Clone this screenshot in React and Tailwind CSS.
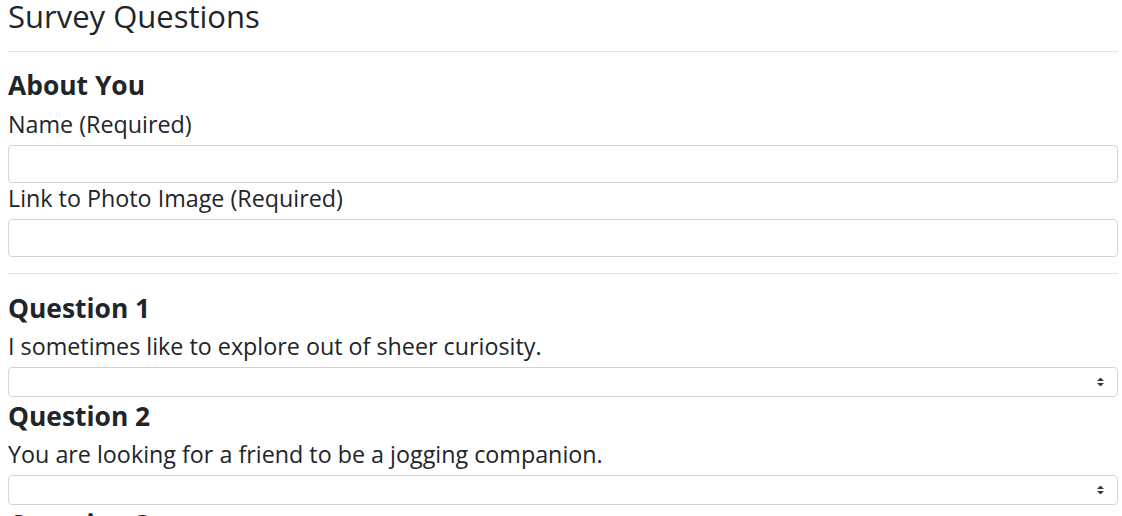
import React from 'react'

const Caret = () => (
  <svg width="7" height="9" viewBox="0 0 7 9" className="absolute right-[13px] top-1/2 -translate-y-1/2">
    <path d="M3.5 0 L7 3.6 H0 Z" fill="#343a40" />
    <path d="M3.5 9 L0 5.4 H7 Z" fill="#343a40" />
  </svg>
)

const Label = ({ children }) => (
  <label className="block text-[23.3px] leading-[30px] mb-[6px]">{children}</label>
)

const TextInput = () => (
  <input type="text" className="block w-full h-[38px] border border-[#ced4da] rounded-[4px] bg-white px-3" />
)

const Select = () => (
  <div className="relative h-[30px] border border-[#ced4da] rounded-[4px] bg-white">
    <Caret />
  </div>
)

const Question = ({ num, text }) => (
  <div>
    <h4 className="text-[26.4px] leading-[32px] font-bold mt-[3px] mb-[7px]">Question {num}</h4>
    <Label>{text}</Label>
    <Select />
  </div>
)

export default function App() {
  return (
    <div className="pl-2 pr-1 h-[516px] overflow-hidden bg-white text-[#212529] font-['Open_Sans',sans-serif]">
      <h3 className="text-[31px] leading-[32px] font-normal">Survey Questions</h3>
      <hr className="mt-[19px] border-0 border-t border-[#e5e5e5]" />

      <h4 className="mt-[17px] mb-[8px] text-[26.4px] leading-[32px] font-bold">About You</h4>
      <Label>Name (Required)</Label>
      <TextInput />
      <Label>Link to Photo Image (Required)</Label>
      <TextInput />
      <hr className="mt-[16px] border-0 border-t border-[#e5e5e5]" />

      <div className="pt-[15px]">
        <Question num={1} text="I sometimes like to explore out of sheer curiosity." />
        <Question num={2} text="You are looking for a friend to be a jogging companion." />
        <Question num={3} text="You enjoy spending time outdoors." />
      </div>
    </div>
  )
}
